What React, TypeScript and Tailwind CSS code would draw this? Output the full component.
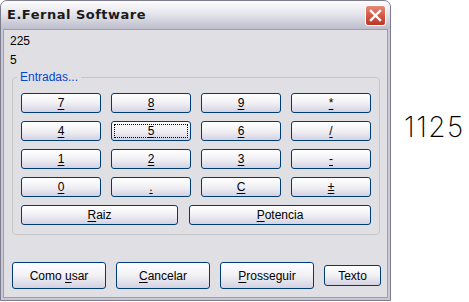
import React from 'react';

const ui = { fontFamily: '"Liberation Sans", Arial, sans-serif' };

interface KeyProps {
  label: React.ReactNode;
  className?: string;
  focused?: boolean;
}

const XpButton: React.FC<KeyProps> = ({ label, className = '', focused = false }) => (
  <button
    className={`flex items-stretch p-[2px] rounded-[3px] border border-[#003c74] bg-gradient-to-b from-[#ffffff] via-[#f1f0f4] to-[#d4d2e2] text-[12px] leading-none text-black ${className}`}
    style={ui}
  >
    <span
      className={`flex-1 flex items-center justify-center border border-dotted ${
        focused ? 'border-black' : 'border-transparent'
      }`}
    >
      <span>{label}</span>
    </span>
  </button>
);

const U: React.FC<{ children: React.ReactNode }> = ({ children }) => (
  <span className="underline underline-offset-2">{children}</span>
);

const keys = ['7', '8', '9', '*', '4', '5', '6', '/', '1', '2', '3', '-', '0', '.', 'C', '±'];

export default function App() {
  return (
    <div className="w-[469px] h-[302px] bg-white flex items-start overflow-hidden">
      <div className="w-[391px] h-[301px] flex flex-col rounded-t-[7px] border border-[#7c7c8e] bg-[#c9c9d6] overflow-hidden">
        <div className="h-[28px] flex items-center justify-between pl-[6px] pr-[4px] bg-gradient-to-b from-[#fdfdfe] via-[#e2e2ea] to-[#bdbdcc]">
          <span
            className="text-[13px] font-bold text-[#1a1a1a] tracking-[0.5px]"
            style={{ fontFamily: '"DejaVu Sans", Verdana, sans-serif' }}
          >
            E.Fernal Software
          </span>
          <div className="w-[21px] h-[21px] rounded-[3px] border border-white bg-gradient-to-b from-[#e58a79] via-[#d35a45] to-[#b83a28] flex items-center justify-center">
            <svg width="13" height="13" viewBox="0 0 13 13">
              <path d="M2 2 L11 11 M11 2 L2 11" stroke="white" strokeWidth="2.4" strokeLinecap="square" />
            </svg>
          </div>
        </div>
        <div className="flex-1 flex flex-col px-[2px] pb-[2px]">
          <div className="flex-1 flex flex-col bg-[#e0dfe3] border border-[#9e9eae]" style={ui}>
            <div className="ml-[6px] mt-[4px] h-[14px] leading-[14px] text-[12px] text-black">225</div>
            <div className="ml-[6px] mt-[5px] h-[14px] leading-[14px] text-[12px] text-black">5</div>
            <fieldset className="ml-[8px] mt-[3px] w-[368px] border border-[#c6c6c8] rounded-[4px] pl-[8px] pr-[8px] pt-[9px] pb-[9px]">
              <legend className="-ml-[4px] px-[3px] text-[12px] leading-[14px] text-[#0046d5]">Entradas...</legend>
              <div className="grid grid-cols-4 gap-x-[10px] gap-y-[8px]">
                {keys.map((k) => (
                  <XpButton key={k} label={<U>{k}</U>} className="h-[20px]" focused={k === '5'} />
                ))}
              </div>
              <div className="flex gap-[11px] mt-[8px]">
                <XpButton label={<><U>R</U>aiz</>} className="w-[157px] h-[20px]" />
                <XpButton label={<><U>P</U>otencia</>} className="flex-1 h-[20px]" />
              </div>
            </fieldset>
            <div className="ml-[8px] mt-[27px] flex items-center gap-[10px]">
              <XpButton label={<>Como <U>u</U>sar</>} className="w-[94px] h-[27px]" />
              <XpButton label={<><U>C</U>ancelar</>} className="w-[94px] h-[27px]" />
              <XpButton label={<><U>P</U>rosseguir</>} className="w-[94px] h-[27px]" />
              <XpButton label="Texto" className="w-[57px] h-[21px]" />
            </div>
          </div>
        </div>
      </div>
      <div
        className="ml-[13px] mt-[110px] text-[28px] leading-[34px] font-extralight tracking-[1.5px] text-black"
        style={{ fontFamily: 'Inter, "DejaVu Sans", sans-serif' }}
      >
        1125
      </div>
    </div>
  );
}
